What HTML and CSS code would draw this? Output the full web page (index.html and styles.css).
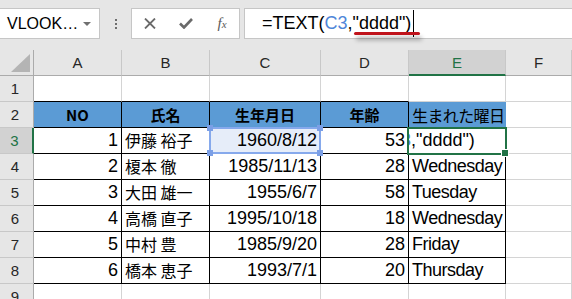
FILE: index.html
```html
<!DOCTYPE html>
<html lang="ja">

<head>
  <meta charset="UTF-8">
  <meta name="viewport" content="width=device-width, initial-scale=1.0">
  <title>TEXT関数で曜日</title>
  <link rel="stylesheet" href="styles.css">
</head>

<body>
  <!-- Formula bar -->
  <div class="formula-bar">
    <div class="name-box">
      <span>VLOOK…</span>
      <svg class="drop" width="8" height="4" viewBox="0 0 8 4"><path d="M0 0h8L4 4z" fill="#707070"/></svg>
    </div>
    <div class="grip"><i></i><i></i><i></i></div>
    <div class="fn-box">
      <svg width="12" height="11" viewBox="0 0 12 11"><path d="M1 0.5l10 10M11 0.5l-10 10" stroke="#6a6a6a" stroke-width="1.8" fill="none"/></svg>
      <svg width="14" height="11" viewBox="0 0 14 11"><path d="M1 5.5l4 4L13 1" stroke="#6a6a6a" stroke-width="2.6" fill="none"/></svg>
      <span class="fx">f<span class="fx-x">x</span></span>
    </div>
    <div class="formula">
      <span>=TEXT(<span class="ref">C3</span>,"dddd")</span><span class="cursor"></span>
      <span class="mark"></span>
    </div>
  </div>

  <!-- Sheet -->
  <div class="sheet">
    <div class="corner"><svg width="19" height="18" viewBox="0 0 19 18"><path d="M19 0V18H0z" fill="#b4b4b4"/></svg></div>
    <div class="col">A</div>
    <div class="col">B</div>
    <div class="col">C</div>
    <div class="col">D</div>
    <div class="col sel">E</div>
    <div class="col">F</div>

    <div class="row">1</div>
    <div class="c top"></div>
    <div class="c top"></div>
    <div class="c top"></div>
    <div class="c top"></div>
    <div class="c"></div>
    <div class="c"></div>

    <div class="row">2</div>
    <div class="c t hd">NO</div>
    <div class="c t hd">氏名</div>
    <div class="c t hd">生年月日</div>
    <div class="c t hd">年齢</div>
    <div class="c hd-e">生まれた曜日</div>
    <div class="c"></div>

    <div class="row sel">3</div>
    <div class="c t num">1</div>
    <div class="c t name">伊藤 裕子</div>
    <div class="c t num picked">1960/8/12<span class="range"><i class="h1"></i><i class="h2"></i><i class="h3"></i><i class="h4"></i></span></div>
    <div class="c t num">53</div>
    <div class="c t editing"><span class="edit-text"><span class="ref cut">3</span>,"dddd")</span><span class="active"></span></div>
    <div class="c"></div>

    <div class="row">4</div>
    <div class="c t num">2</div>
    <div class="c t name">榎本 徹</div>
    <div class="c t num">1985/11/13</div>
    <div class="c t num">28</div>
    <div class="c t day">Wednesday</div>
    <div class="c"></div>

    <div class="row">5</div>
    <div class="c t num">3</div>
    <div class="c t name">大田 雄一</div>
    <div class="c t num">1955/6/7</div>
    <div class="c t num">58</div>
    <div class="c t day">Tuesday</div>
    <div class="c"></div>

    <div class="row">6</div>
    <div class="c t num">4</div>
    <div class="c t name">高橋 直子</div>
    <div class="c t num">1995/10/18</div>
    <div class="c t num">18</div>
    <div class="c t day">Wednesday</div>
    <div class="c"></div>

    <div class="row">7</div>
    <div class="c t num">5</div>
    <div class="c t name">中村 豊</div>
    <div class="c t num">1985/9/20</div>
    <div class="c t num">28</div>
    <div class="c t day">Friday</div>
    <div class="c"></div>

    <div class="row">8</div>
    <div class="c t num">6</div>
    <div class="c t name">橋本 恵子</div>
    <div class="c t num">1993/7/1</div>
    <div class="c t num">20</div>
    <div class="c t day">Thursday</div>
    <div class="c"></div>

    <div class="row">9</div>
    <div class="c"></div>
    <div class="c"></div>
    <div class="c"></div>
    <div class="c"></div>
    <div class="c"></div>
    <div class="c"></div>
  </div>
</body>

</html>
```

FILE: styles.css
```css
* {
  box-sizing: border-box;
}

body {
  margin: 0;
  background-color: #e6e6e6;
  font-family: "Liberation Sans", Arial, sans-serif;
  color: #000;
  overflow: hidden;
}

/* Formula bar */
.formula-bar {
  height: 50px;
  display: flex;
  align-items: flex-start;
  padding-top: 8px;
}

.name-box {
  width: 101px;
  height: 31px;
  margin-left: -1px;
  background-color: #fff;
  border: 1px solid #c6c6c6;
  display: flex;
  align-items: center;
  justify-content: space-between;
  padding: 0 8px 0 7px;
  font-size: 16px;
}

.grip {
  width: 31px;
  height: 31px;
  display: flex;
  flex-direction: column;
  align-items: center;
  gap: 2px;
  padding-top: 11px;
}

.grip i {
  width: 2px;
  height: 2px;
  background-color: #6e6e6e;
}

.fn-box {
  width: 109px;
  height: 31px;
  margin-right: 4px;
  background-color: #fff;
  border: 1px solid #c6c6c6;
  display: grid;
  grid-template-columns: repeat(3, 36px);
  align-items: center;
  justify-items: center;
}

.fx {
  font-family: "Liberation Serif", serif;
  font-style: italic;
  font-size: 15px;
  color: #5a5a5a;
}

.fx-x {
  font-size: 11px;
}

.formula {
  position: relative;
  flex: 1;
  height: 31px;
  margin-right: -1px;
  background-color: #fff;
  border: 1px solid #c6c6c6;
  display: flex;
  align-items: center;
  padding-left: 17px;
  font-size: 18px;
}

.ref {
  color: #4f86d9;
}

.cursor {
  width: 1px;
  height: 27px;
  margin-left: 2px;
  background-color: #000;
}

/* red hand-drawn underline */
.mark {
  position: absolute;
  left: 109px;
  top: 23px;
  width: 66px;
  height: 3px;
  border-radius: 2px;
  background-color: #c0141c;
  box-shadow: 2px 5px 4px rgba(0, 0, 0, 0.35);
}

/* Sheet */
.sheet {
  display: grid;
  grid-template-columns: 34px 88px 88px 111px 88px 97px 1fr;
  grid-auto-rows: 26px;
  background-color: #fff;
}

.corner,
.col,
.row {
  background-color: #e6e6e6;
  display: flex;
  align-items: center;
  justify-content: center;
  font-size: 15px;
  color: #262626;
}

.corner {
  align-items: flex-end;
  justify-content: flex-end;
  padding: 0 3px 3px 0;
  border-right: 1px solid #ababab;
  border-bottom: 1px solid #ababab;
}

.col {
  border-right: 1px solid #c8c8c8;
  border-bottom: 1px solid #ababab;
}

.row {
  padding-right: 3px;
  border-right: 1px solid #ababab;
  border-bottom: 1px solid #c8c8c8;
}

.col.sel {
  background-color: #d2d2d2;
  color: #217346;
  border-bottom: 2px solid #217346;
}

.row.sel {
  background-color: #d2d2d2;
  color: #217346;
  border-right: 2px solid #217346;
}

.c {
  border-right: 1px solid #d4d4d4;
  border-bottom: 1px solid #d4d4d4;
  display: flex;
  align-items: flex-end;
  padding: 0 3px 3px;
  font-size: 18px;
  line-height: 20px;
  white-space: nowrap;
}

.c.top {
  border-bottom-color: #000;
}

.c.t {
  border-right-color: #000;
  border-bottom-color: #000;
}

.hd {
  background-color: #5b9bd5;
  align-items: center;
  justify-content: center;
  padding: 0;
  font-family: "Noto Sans CJK JP", sans-serif;
  font-weight: bold;
  font-size: 15px;
}

.hd-e {
  background-color: #5b9bd5;
  border-right-color: #5b9bd5;
  align-items: center;
  padding: 0 0 0 3px;
  overflow: hidden;
  font-family: "Noto Sans CJK JP", sans-serif;
  font-size: 16px;
  letter-spacing: -0.6px;
}

.num {
  justify-content: flex-end;
}

.name {
  font-family: "Noto Sans CJK JP", sans-serif;
  font-size: 16px;
}

.day {
  letter-spacing: -0.5px;
}

/* selected range C3 */
.picked {
  position: relative;
  background-color: #e6edf9;
}

.range {
  position: absolute;
  left: -1px;
  top: -1px;
  right: -1px;
  bottom: -1px;
  border: 2px solid #86a9ec;
  z-index: 2;
}

.range i {
  position: absolute;
  width: 6px;
  height: 6px;
  background-color: #7b9fe6;
}

.range .h1 { left: -4px; top: -4px; }
.range .h2 { right: -4px; top: -4px; }
.range .h3 { left: -4px; bottom: -4px; }
.range .h4 { right: -4px; bottom: -4px; }

/* active cell E3 */
.editing {
  position: relative;
  padding: 0 0 3px;
}

.edit-text {
  display: block;
  flex: 1;
  overflow: hidden;
  padding-left: 7px;
}

.cut {
  margin-left: -15px;
}

.active {
  position: absolute;
  left: -2px;
  top: -1px;
  right: -2px;
  bottom: -2px;
  border: 2px solid #217346;
  z-index: 3;
}

.active::after {
  content: "";
  position: absolute;
  right: -4px;
  bottom: -4px;
  width: 6px;
  height: 6px;
  background-color: #217346;
  border: 1px solid #fff;
}
```
